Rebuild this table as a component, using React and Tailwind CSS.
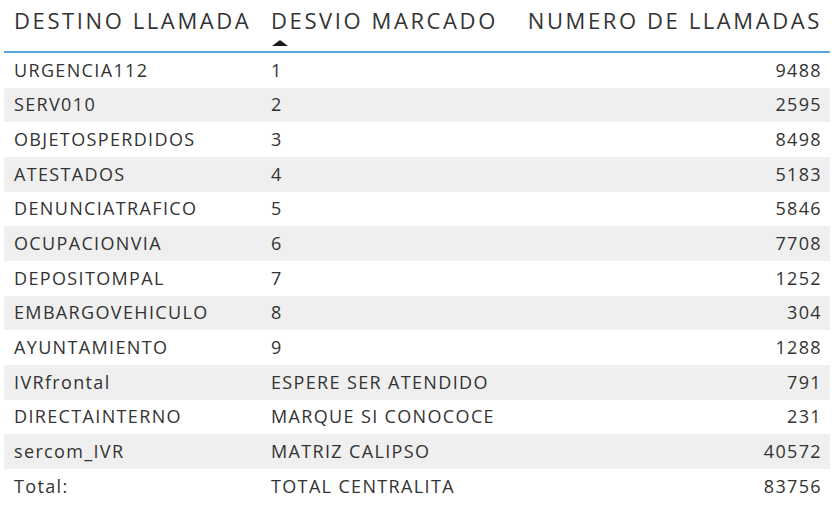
import React from "react";

const rows = [
  ["URGENCIA112", "1", "9488"],
  ["SERV010", "2", "2595"],
  ["OBJETOSPERDIDOS", "3", "8498"],
  ["ATESTADOS", "4", "5183"],
  ["DENUNCIATRAFICO", "5", "5846"],
  ["OCUPACIONVIA", "6", "7708"],
  ["DEPOSITOMPAL", "7", "1252"],
  ["EMBARGOVEHICULO", "8", "304"],
  ["AYUNTAMIENTO", "9", "1288"],
  ["IVRfrontal", "ESPERE SER ATENDIDO", "791"],
  ["DIRECTAINTERNO", "MARQUE SI CONOCOCE", "231"],
  ["sercom_IVR", "MATRIZ CALIPSO", "40572"],
];

const App = () => {
  return (
    <div
      className="w-[834px] h-[515px] bg-white px-[4px] text-[#333333] overflow-hidden"
      style={{ fontFamily: '"Open Sans", "Noto Sans", sans-serif' }}
    >
      {/* header */}
      <div className="grid grid-cols-[257px_255px_1fr] h-[53px] border-b-2 border-[#5aa5e0] text-[22px] leading-none tracking-[2.6px]">
        <div className="pl-[10px] pt-[9px]">DESTINO LLAMADA</div>
        <div className="pl-[10px] pt-[9px] relative">
          DESVIO MARCADO
          <svg className="absolute left-[11px] top-[40px]" width="16" height="6" viewBox="0 0 16 6">
            <path d="M0 6 L8 0 L16 6 Z" fill="#1a1a1a" />
          </svg>
        </div>
        <div className="pr-[8px] pt-[9px] text-right">NUMERO DE LLAMADAS</div>
      </div>

      {rows.map((r, i) => (
        <div
          key={r[0]}
          className={`grid grid-cols-[257px_255px_1fr] h-[34.67px] items-center text-[18px] tracking-[1.35px] ${
            i % 2 === 1 ? "bg-[#efefef]" : "bg-white"
          }`}
        >
          <div className="pl-[10px]">{r[0]}</div>
          <div className="pl-[10px]">{r[1]}</div>
          <div className="pr-[8px] text-right">{r[2]}</div>
        </div>
      ))}

      <div className="grid grid-cols-[257px_255px_1fr] h-[34.67px] items-center text-[18px] tracking-[1.35px]">
        <div className="pl-[10px]">Total:</div>
        <div className="pl-[10px]">TOTAL CENTRALITA</div>
        <div className="pr-[8px] text-right">83756</div>
      </div>
    </div>
  );
};

export default App;
